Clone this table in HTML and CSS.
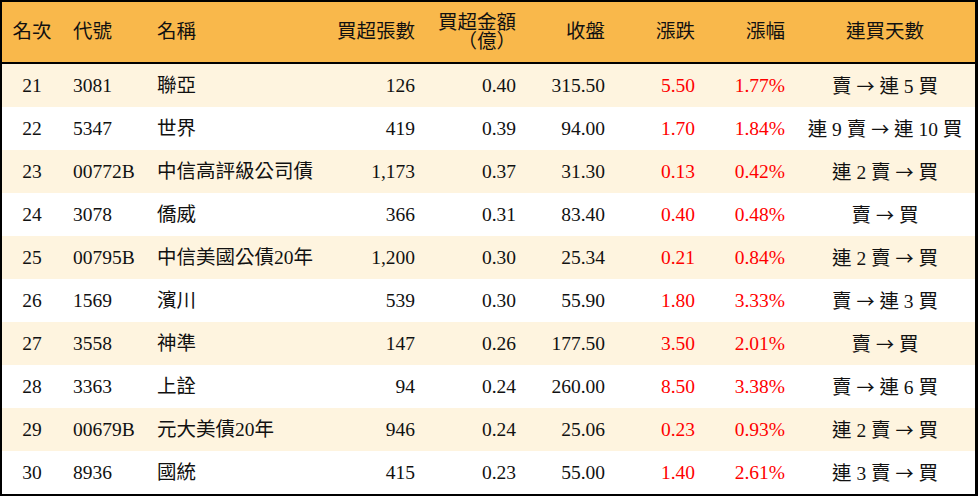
FILE: index.html
```html
<!DOCTYPE html>
<html lang="zh-Hant">
<head>
<meta charset="utf-8">
<title>買超排行</title>
<link rel="stylesheet" href="styles.css">
</head>
<body>
<div class="table">
  <div class="row head">
    <div class="c c1">名次</div>
    <div class="c c2">代號</div>
    <div class="c c3">名稱</div>
    <div class="c num">買超張數</div>
    <div class="c num two">買超金額<br>（億）</div>
    <div class="c num">收盤</div>
    <div class="c num">漲跌</div>
    <div class="c num">漲幅</div>
    <div class="c c9">連買天數</div>
  </div>
  <div class="row odd">
    <div class="c c1">21</div><div class="c c2">3081</div><div class="c c3">聯亞</div>
    <div class="c num">126</div><div class="c num">0.40</div><div class="c num">315.50</div>
    <div class="c num red">5.50</div><div class="c num red">1.77%</div><div class="c c9">賣 <span class="arr">→</span> 連 5 買</div>
  </div>
  <div class="row">
    <div class="c c1">22</div><div class="c c2">5347</div><div class="c c3">世界</div>
    <div class="c num">419</div><div class="c num">0.39</div><div class="c num">94.00</div>
    <div class="c num red">1.70</div><div class="c num red">1.84%</div><div class="c c9">連 9 賣 <span class="arr">→</span> 連 10 買</div>
  </div>
  <div class="row odd">
    <div class="c c1">23</div><div class="c c2">00772B</div><div class="c c3">中信高評級公司債</div>
    <div class="c num">1,173</div><div class="c num">0.37</div><div class="c num">31.30</div>
    <div class="c num red">0.13</div><div class="c num red">0.42%</div><div class="c c9">連 2 賣 <span class="arr">→</span> 買</div>
  </div>
  <div class="row">
    <div class="c c1">24</div><div class="c c2">3078</div><div class="c c3">僑威</div>
    <div class="c num">366</div><div class="c num">0.31</div><div class="c num">83.40</div>
    <div class="c num red">0.40</div><div class="c num red">0.48%</div><div class="c c9">賣 <span class="arr">→</span> 買</div>
  </div>
  <div class="row odd">
    <div class="c c1">25</div><div class="c c2">00795B</div><div class="c c3">中信美國公債20年</div>
    <div class="c num">1,200</div><div class="c num">0.30</div><div class="c num">25.34</div>
    <div class="c num red">0.21</div><div class="c num red">0.84%</div><div class="c c9">連 2 賣 <span class="arr">→</span> 買</div>
  </div>
  <div class="row">
    <div class="c c1">26</div><div class="c c2">1569</div><div class="c c3">濱川</div>
    <div class="c num">539</div><div class="c num">0.30</div><div class="c num">55.90</div>
    <div class="c num red">1.80</div><div class="c num red">3.33%</div><div class="c c9">賣 <span class="arr">→</span> 連 3 買</div>
  </div>
  <div class="row odd">
    <div class="c c1">27</div><div class="c c2">3558</div><div class="c c3">神準</div>
    <div class="c num">147</div><div class="c num">0.26</div><div class="c num">177.50</div>
    <div class="c num red">3.50</div><div class="c num red">2.01%</div><div class="c c9">賣 <span class="arr">→</span> 買</div>
  </div>
  <div class="row">
    <div class="c c1">28</div><div class="c c2">3363</div><div class="c c3">上詮</div>
    <div class="c num">94</div><div class="c num">0.24</div><div class="c num">260.00</div>
    <div class="c num red">8.50</div><div class="c num red">3.38%</div><div class="c c9">賣 <span class="arr">→</span> 連 6 買</div>
  </div>
  <div class="row odd">
    <div class="c c1">29</div><div class="c c2">00679B</div><div class="c c3">元大美債20年</div>
    <div class="c num">946</div><div class="c num">0.24</div><div class="c num">25.06</div>
    <div class="c num red">0.23</div><div class="c num red">0.93%</div><div class="c c9">連 2 賣 <span class="arr">→</span> 買</div>
  </div>
  <div class="row">
    <div class="c c1">30</div><div class="c c2">8936</div><div class="c c3">國統</div>
    <div class="c num">415</div><div class="c num">0.23</div><div class="c num">55.00</div>
    <div class="c num red">1.40</div><div class="c num red">2.61%</div><div class="c c9">連 3 賣 <span class="arr">→</span> 買</div>
  </div>
</div>
</body>
</html>
```

FILE: styles.css
```css
html, body {
  margin: 0;
  padding: 0;
  background: #ffffff;
}

.table {
  box-sizing: border-box;
  width: 978px;
  height: 496px;
  border-top: 2px solid #000;
  border-left: 2px solid #000;
  border-right: 3px solid #000;
  border-bottom: 2px solid #000;
  font-family: "Liberation Serif", "Noto Sans CJK TC", serif;
  font-size: 19.5px;
  color: #111;
  display: flex;
  flex-direction: column;
}

.row {
  display: grid;
  grid-template-columns: 60px 85px 183px 95px 101px 89px 90px 90px 180px;
  height: 43px;
  align-items: center;
  background: #ffffff;
}

.row.odd {
  background: #fef4df;
}

.row.head {
  height: 60px;
  background: #f9b84b;
  border-bottom: 2px solid #000;
}

.c {
  white-space: nowrap;
  line-height: 22px;
}

.c1 {
  text-align: center;
}

.c2, .c3 {
  text-align: left;
  padding-left: 11px;
}

.c3 {
  padding-left: 10px;
}

.num {
  text-align: right;
  padding-right: 10px;
}

.two {
  line-height: 19px;
}

.c9 {
  text-align: center;
}

.arr {
  font-family: "Noto Sans CJK TC", sans-serif;
  font-size: 18px;
}

.red {
  color: #ff0000;
}
```
